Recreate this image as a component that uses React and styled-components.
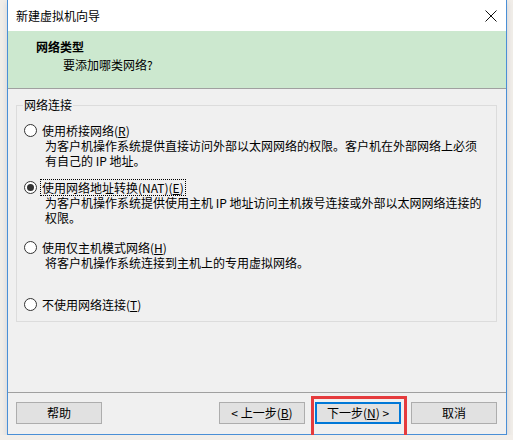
import React from 'react';
import styled, { createGlobalStyle } from 'styled-components';

const GlobalStyle = createGlobalStyle`
  html, body {
    margin: 0;
    padding: 0;
    background-color: #f2eee9;
  }
  body {
    font-family: "Noto Sans CJK SC", "Noto Sans", sans-serif;
    font-size: 12px;
    color: #000000;
  }
`;

const StyledWindow = styled.div`
  box-sizing: border-box;
  margin-left: 7px;
  width: 500px;
  height: 435px;
  display: flex;
  flex-direction: column;
  background-color: #f0f0f0;
  border: 1px solid #4a8fd6;
  border-top: none;
  box-shadow: 0 2px 6px rgba(90, 120, 160, 0.25);
`;

const StyledTitleBar = styled.div`
  height: 31px;
  display: flex;
  align-items: center;
  justify-content: space-between;
  padding: 0 9px 0 8px;
  background-color: #ffffff;
  line-height: 16px;
`;

const StyledClose = styled.div`
  display: flex;
  width: 12px;
  height: 12px;
`;

const StyledHeader = styled.div`
  height: 57px;
  padding-left: 28px;
  background-color: #cce8cf;
  border-bottom: 1px solid #a0a0a0;

  h2 {
    margin: 8px 0 0;
    font-size: 12px;
    font-weight: bold;
    line-height: 16px;
  }
  p {
    margin: 2px 0 0 27px;
    line-height: 16px;
  }
`;

const StyledBody = styled.div`
  flex: 1;
  padding: 8px 9px 0 8px;
`;

const StyledGroup = styled.fieldset`
  margin: 0;
  padding: 9px 8px 9px 7px;
  border: 1px solid #dcdcdc;
  min-width: 0;

  legend {
    padding: 0 1px;
    margin-left: -1px;
    line-height: 16px;
  }
`;

const StyledOption = styled.div`
  margin-top: ${(p) => p.$top || 0}px;
`;

const StyledRadioRow = styled.div`
  display: flex;
  align-items: center;
  height: 16px;
  line-height: 15px;
`;

const StyledRadio = styled.span`
  box-sizing: border-box;
  width: 13px;
  height: 13px;
  margin-right: 3px;
  border-radius: 50%;
  border: 1px solid #333333;
  background-color: #ffffff;
  display: flex;
  align-items: center;
  justify-content: center;

  &::after {
    content: '';
    display: ${(p) => (p.$checked ? 'block' : 'none')};
    width: 7px;
    height: 7px;
    border-radius: 50%;
    background-color: #333333;
  }
`;

const StyledLabel = styled.span`
  padding: 0 1px;
  border: 1px dotted ${(p) => (p.$focused ? '#000000' : 'transparent')};
`;

// one wrapped paragraph, width set so it breaks where the dialog does
const StyledDesc = styled.div`
  margin-left: 21px;
  width: 443px;
  line-height: 15px;
`;

const StyledFooter = styled.div`
  display: flex;
  padding: 9px 9px 10px 8px;
  border-top: 1px solid #a0a0a0;
`;

const StyledSpacer = styled.div`
  flex: 1;
`;

const StyledButtonWrap = styled.div`
  position: relative;
  margin-left: ${(p) => p.$gap || 0}px;
`;

const StyledButton = styled.button`
  box-sizing: border-box;
  width: 86px;
  height: 22px;
  padding: 0;
  font-family: inherit;
  font-size: 12px;
  line-height: 14px;
  color: #000000;
  background-color: #e1e1e1;
  border: ${(p) => (p.$default ? '2px solid #0078d7' : '1px solid #adadad')};
`;

const StyledHighlight = styled.div`
  position: absolute;
  left: -4px;
  right: -6px;
  top: -6px;
  bottom: -17px;
  border: 3px solid #e53b3d;
  pointer-events: none;
`;

const options = [
  {
    label: '使用桥接网络',
    key: 'R',
    top: 0,
    desc: '为客户机操作系统提供直接访问外部以太网网络的权限。客户机在外部网络上必须有自己的 IP 地址。',
  },
  {
    label: '使用网络地址转换(NAT)',
    key: 'E',
    top: 11,
    checked: true,
    desc: '为客户机操作系统提供使用主机 IP 地址访问主机拨号连接或外部以太网网络连接的权限。',
  },
  {
    label: '使用仅主机模式网络',
    key: 'H',
    top: 14,
    desc: '将客户机操作系统连接到主机上的专用虚拟网络。',
  },
  {
    label: '不使用网络连接',
    key: 'T',
    top: 26,
  },
];

const App = () => {
  return (
    <>
      <GlobalStyle />
      <StyledWindow>
        <StyledTitleBar>
          <span>新建虚拟机向导</span>
          <StyledClose>
            <svg width='12' height='12' viewBox='0 0 12 12'>
              <path d='M0.5 0.5 L11.5 11.5 M11.5 0.5 L0.5 11.5' stroke='#111' strokeWidth='1' fill='none' />
            </svg>
          </StyledClose>
        </StyledTitleBar>

        <StyledHeader>
          <h2>网络类型</h2>
          <p>要添加哪类网络?</p>
        </StyledHeader>

        <StyledBody>
          <StyledGroup>
            <legend>网络连接</legend>
            {options.map((opt) => (
              <StyledOption key={opt.key} $top={opt.top}>
                <StyledRadioRow>
                  <StyledRadio $checked={opt.checked} />
                  <StyledLabel $focused={opt.checked}>
                    {opt.label}(<u>{opt.key}</u>)
                  </StyledLabel>
                </StyledRadioRow>
                {opt.desc && <StyledDesc>{opt.desc}</StyledDesc>}
              </StyledOption>
            ))}
          </StyledGroup>
        </StyledBody>

        <StyledFooter>
          <StyledButtonWrap>
            <StyledButton>帮助</StyledButton>
          </StyledButtonWrap>
          <StyledSpacer />
          <StyledButtonWrap>
            <StyledButton>
              &lt; 上一步(<u>B</u>)
            </StyledButton>
          </StyledButtonWrap>
          <StyledButtonWrap $gap={10}>
            <StyledButton $default>
              下一步(<u>N</u>) &gt;
            </StyledButton>
            <StyledHighlight />
          </StyledButtonWrap>
          <StyledButtonWrap $gap={10}>
            <StyledButton>取消</StyledButton>
          </StyledButtonWrap>
        </StyledFooter>
      </StyledWindow>
    </>
  );
};

export default App;
